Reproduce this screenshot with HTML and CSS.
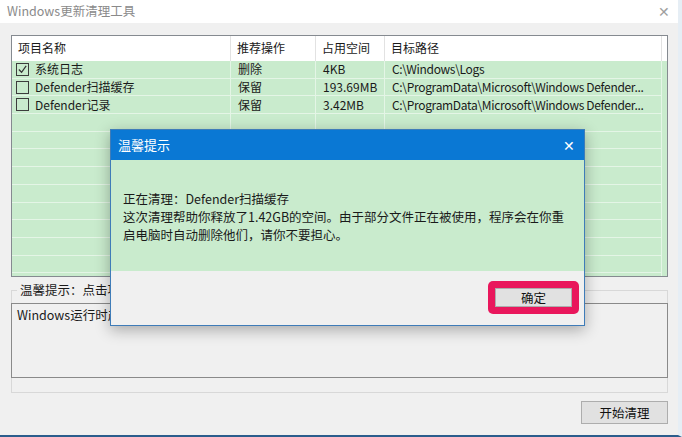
FILE: index.html
```html
<!DOCTYPE html>
<html lang="zh-CN">

<head>
    <meta charset="UTF-8">
    <title>Windows更新清理工具</title>
    <link rel="stylesheet" href="styles.css">
</head>

<body>

    <div class="window">
        <div class="titlebar">
            <span class="title">Windows更新清理工具</span>
            <span class="close">&#x2715;</span>
        </div>

        <div class="main">
            <!-- file list -->
            <div class="list">
                <div class="list-head">
                    <div class="cell">项目名称</div>
                    <div class="cell">推荐操作</div>
                    <div class="cell">占用空间</div>
                    <div class="cell">目标路径</div>
                </div>
                <div class="row">
                    <div class="cell"><span class="check on"><svg viewBox="0 0 12 12"><polyline points="2,6 5,9 10,2" /></svg></span>系统日志</div>
                    <div class="cell">删除</div>
                    <div class="cell">4KB</div>
                    <div class="cell path">C:\Windows\Logs</div>
                </div>
                <div class="row">
                    <div class="cell"><span class="check"></span>Defender扫描缓存</div>
                    <div class="cell">保留</div>
                    <div class="cell">193.69MB</div>
                    <div class="cell path">C:\ProgramData\Microsoft\Windows Defender...</div>
                </div>
                <div class="row">
                    <div class="cell"><span class="check"></span>Defender记录</div>
                    <div class="cell">保留</div>
                    <div class="cell">3.42MB</div>
                    <div class="cell path">C:\ProgramData\Microsoft\Windows Defender...</div>
                </div>
                <div class="row"><div class="cell"></div><div class="cell"></div><div class="cell"></div><div class="cell"></div></div>
                <div class="row"><div class="cell"></div><div class="cell"></div><div class="cell"></div><div class="cell"></div></div>
                <div class="row"><div class="cell"></div><div class="cell"></div><div class="cell"></div><div class="cell"></div></div>
                <div class="row"><div class="cell"></div><div class="cell"></div><div class="cell"></div><div class="cell"></div></div>
                <div class="row"><div class="cell"></div><div class="cell"></div><div class="cell"></div><div class="cell"></div></div>
                <div class="row"><div class="cell"></div><div class="cell"></div><div class="cell"></div><div class="cell"></div></div>
                <div class="row"><div class="cell"></div><div class="cell"></div><div class="cell"></div><div class="cell"></div></div>
                <div class="row"><div class="cell"></div><div class="cell"></div><div class="cell"></div><div class="cell"></div></div>
                <div class="row"><div class="cell"></div><div class="cell"></div><div class="cell"></div><div class="cell"></div></div>
                <div class="row"><div class="cell"></div><div class="cell"></div><div class="cell"></div><div class="cell"></div></div>
            </div>

            <!-- tips group -->
            <fieldset class="tips">
                <legend>温馨提示：点击项目查看说明</legend>
                <div class="tips-box">Windows运行时产生的日志文件，可以放心删除。</div>
            </fieldset>

            <div class="actions">
                <button class="btn">开始清理</button>
            </div>
        </div>

        <!-- message dialog -->
        <div class="dialog">
            <div class="dialog-title">
                <span>温馨提示</span>
                <span class="dialog-close">&#x2715;</span>
            </div>
            <div class="dialog-body">
                <p>正在清理：Defender扫描缓存</p>
                <p>这次清理帮助你释放了1.42GB的空间。由于部分文件正在被使用，程序会在你重</p>
                <p>启电脑时自动删除他们，请你不要担心。</p>
            </div>
            <div class="dialog-foot">
                <span class="mark"><button class="btn ok">确定</button></span>
            </div>
        </div>
    </div>

</body>

</html>
```

FILE: styles.css
```css
/* Basic reset */
* {
    margin: 0;
    padding: 0;
    box-sizing: border-box;
}

body {
    font-family: "Noto Sans CJK SC", "Noto Sans", sans-serif;
    font-size: 12px;
    color: #1a1a1a;
    background-color: #f0f0f0;
}

.window {
    position: relative;
    width: 682px;
    height: 437px;
    background-color: #f0f0f0;
    border-bottom: 2px solid #2b5d8c;
    border-right: 4px solid #e6eef5;
    overflow: hidden;
}

.titlebar {
    height: 23px;
    background-color: white;
    display: flex;
    align-items: center;
    justify-content: space-between;
    padding: 0 8px 2px 7px;
    color: #8a8a8a;
    line-height: 16px;
    font-size: 12.5px;
}

.titlebar .close {
    font-size: 14px;
    color: #a0a0a0;
}

.main {
    padding: 12px 10px 0 11px;
}

/* list */
.list {
    height: 242px;
    border: 1px solid #858a90;
    background-color: #eceeee;
    overflow: hidden;
}

.list-head,
.row {
    display: grid;
    grid-template-columns: 219px 85px 69px 277px;
}

.list-head {
    height: 25px;
    background-color: white;
}

.list-head .cell {
    border-right: 1px solid #e2e2e2;
    padding: 4px 0 0 6px;
    line-height: 16px;
}

.row {
    height: 17.7px;
    background-color: #c9ebcd;
}

.row .cell {
    border-right: 1px solid #e4f5e6;
    border-bottom: 1px solid #e4f5e6;
    padding: 0 0 0 7px;
    line-height: 16px;
    white-space: nowrap;
    overflow: hidden;
    display: flex;
    align-items: center;
}

.row .cell:first-child {
    padding-left: 4px;
}

.row .path {
    letter-spacing: -0.32px;
}

.check {
    width: 13px;
    height: 13px;
    border: 1px solid #3c3c3c;
    margin-right: 6px;
    flex-shrink: 0;
    display: inline-flex;
}

.check svg {
    width: 11px;
    height: 11px;
    fill: none;
    stroke: #333;
    stroke-width: 1.3;
}

/* tips group */
.tips {
    margin-top: 5px;
    border: 1px solid #d8d8d8;
    padding: 0 0 14px 0;
}

.tips legend {
    margin-left: 5px;
    padding: 0 3px;
    line-height: 16px;
    font-size: 12.5px;
}

.tips-box {
    margin: 5px -1px 0 -1px;
    height: 75px;
    border: 1px solid #8a8a8a;
    background-color: #f0f0f0;
    padding: 3px 5px;
    line-height: 16px;
    font-size: 12.5px;
}

.actions {
    display: flex;
    justify-content: flex-end;
    margin-top: 8px;
}

.btn {
    font-family: inherit;
    font-size: 12.5px;
    color: #111;
    background-color: #e1e1e1;
    border: 1px solid #adadad;
    line-height: 16px;
}

.actions .btn {
    width: 87px;
    height: 23px;
}

/* dialog */
.dialog {
    position: absolute;
    left: 110px;
    top: 129px;
    width: 475px;
    height: 197px;
    border: 1px solid #3f7cb8;
    background-color: #f0f0f0;
    box-shadow: 0 4px 14px rgba(0, 0, 0, 0.3);
    display: flex;
    flex-direction: column;
}

.dialog-title {
    height: 30px;
    background-color: #0a78d4;
    color: white;
    font-size: 13px;
    line-height: 16px;
    display: flex;
    align-items: center;
    justify-content: space-between;
    padding: 0 9px 0 7px;
}

.dialog-close {
    font-size: 14px;
}

.dialog-body {
    height: 111px;
    background-color: #c9ebcd;
    padding: 30px 0 0 12px;
    line-height: 18px;
    font-size: 12.5px;
}

.dialog-foot {
    flex: 1;
    display: flex;
    justify-content: flex-end;
    align-items: flex-start;
    padding: 10px 5px 0 0;
}

.mark {
    background-color: #e9175c;
    border-radius: 5px;
    padding: 7px;
    display: inline-flex;
}

.ok {
    width: 77px;
    height: 19px;
}
```
